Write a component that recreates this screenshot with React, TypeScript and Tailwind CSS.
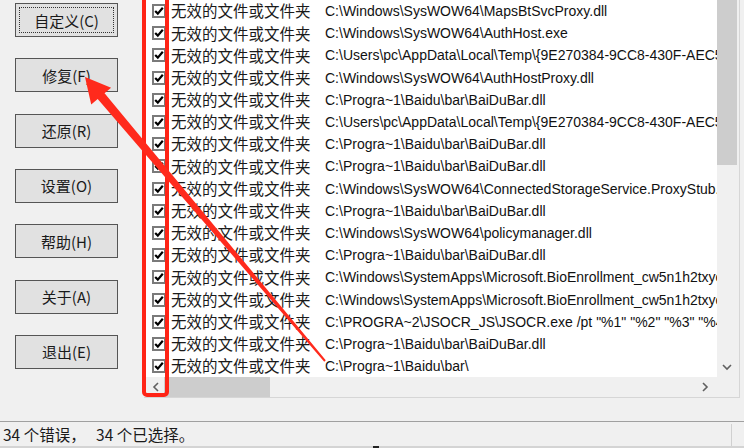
import React from "react";

const buttons = ["自定义(C)", "修复(F)", "还原(R)", "设置(O)", "帮助(H)", "关于(A)", "退出(E)"];

const rows = [
  "C:\\Windows\\SysWOW64\\MapsBtSvcProxy.dll",
  "C:\\Windows\\SysWOW64\\AuthHost.exe",
  "C:\\Users\\pc\\AppData\\Local\\Temp\\{9E270384-9CC8-430F-AEC5-7B1D2E9F0A43}\\setup.exe",
  "C:\\Windows\\SysWOW64\\AuthHostProxy.dll",
  "C:\\Progra~1\\Baidu\\bar\\BaiDuBar.dll",
  "C:\\Users\\pc\\AppData\\Local\\Temp\\{9E270384-9CC8-430F-AEC5-7B1D2E9F0A43}\\uninst.exe",
  "C:\\Progra~1\\Baidu\\bar\\BaiDuBar.dll",
  "C:\\Progra~1\\Baidu\\bar\\BaiDuBar.dll",
  "C:\\Windows\\SysWOW64\\ConnectedStorageService.ProxyStub.dll",
  "C:\\Progra~1\\Baidu\\bar\\BaiDuBar.dll",
  "C:\\Windows\\SysWOW64\\policymanager.dll",
  "C:\\Progra~1\\Baidu\\bar\\BaiDuBar.dll",
  "C:\\Windows\\SystemApps\\Microsoft.BioEnrollment_cw5n1h2txyewy\\BioEnrollment.exe",
  "C:\\Windows\\SystemApps\\Microsoft.BioEnrollment_cw5n1h2txyewy\\BioEnrollmentHost.exe",
  "C:\\PROGRA~2\\JSOCR_JS\\JSOCR.exe /pt \"%1\" \"%2\" \"%3\" \"%4\"",
  "C:\\Progra~1\\Baidu\\bar\\BaiDuBar.dll",
  "C:\\Progra~1\\Baidu\\bar\\",
];

// red arrow: tip near the 修复 button, thin tail at the last row
function arrowPoints() {
  const T = [85, 77];
  const E = [325, 361];
  const dx = E[0] - T[0];
  const dy = E[1] - T[1];
  const len = Math.hypot(dx, dy);
  const u = [dx / len, dy / len];
  const n = [-u[1], u[0]];
  const head = 25;
  const wing = 13;
  const B = [T[0] + head * u[0], T[1] + head * u[1]];
  const p = (c: number[], k: number) => `${c[0] + k * n[0]},${c[1] + k * n[1]}`;
  return [
    `${T[0]},${T[1]}`,
    p(B, wing),
    p(B, 4.5),
    p(E, 1),
    p(E, -1),
    p(B, -4.5),
    p(B, -wing),
  ].join(" ");
}

function Chevron({ dir }: { dir: "left" | "right" | "down" }) {
  const d =
    dir === "left" ? "M6 1 L2 5 L6 9" : dir === "right" ? "M2 1 L6 5 L2 9" : "M1 2 L5 6 L9 2";
  const w = dir === "down" ? 10 : 8;
  const h = dir === "down" ? 8 : 10;
  return (
    <svg width={w} height={h} viewBox={`0 0 ${w} ${h}`}>
      <path d={d} fill="none" stroke="#606060" strokeWidth="1.6" />
    </svg>
  );
}

function CheckBox() {
  return (
    <div className="w-[14px] h-[14px] border-2 border-[#7a7a7a] bg-white flex items-center justify-center shrink-0">
      <svg width="10" height="10" viewBox="0 0 10 10">
        <path d="M1.2 5 L3.8 7.6 L8.8 1.8" fill="none" stroke="#000" strokeWidth="2.2" />
      </svg>
    </div>
  );
}

export default function App() {
  return (
    <div className="relative w-[744px] h-[448px] overflow-hidden bg-[#f0f0f0] text-black font-['Noto_Sans_CJK_SC',sans-serif]">
      <div className="flex h-[421px]">
        {/* Buttons */}
        <div className="w-[144px] shrink-0 pl-[15px] pt-[3px] flex flex-col gap-[21.33px]">
          {buttons.map((b, i) => (
            <div
              key={b}
              className="relative w-[103px] h-[34px] border border-[#555555] bg-[#e1e1e1] flex items-center justify-center text-[15px] leading-none text-[#1a1a1a]"
            >
              {i === 0 && (
                <div className="absolute inset-[3px] border border-dotted border-[#333333]" />
              )}
              {b}
            </div>
          ))}
        </div>

        {/* List */}
        <div className="w-[596px] h-[398px] flex flex-col border-r border-b border-[#d6d6d6] bg-white">
          <div className="flex h-[377px]">
            <div className="w-[573px] overflow-hidden">
              {rows.map((r, i) => (
                <div key={i} className="flex items-center h-[22.2px] pl-[8px] whitespace-nowrap">
                  <CheckBox />
                  <span className="ml-[5px] w-[154px] shrink-0 text-[15.5px] leading-none text-[#1a1a1a]">
                    无效的文件或文件夹
                  </span>
                  <span className="font-['Liberation_Sans',sans-serif] text-[14px] leading-none text-[#111111]">
                    {r}
                  </span>
                </div>
              ))}
            </div>
            <div className="w-[22px] bg-[#f0f0f0] flex flex-col">
              <div className="w-[20px] h-[165px] bg-[#cdcdcd]" />
              <div className="flex-1" />
              <div className="w-[20px] h-[20px] flex items-center justify-center">
                <Chevron dir="down" />
              </div>
            </div>
          </div>
          <div className="flex h-[20px] bg-[#f0f0f0]">
            <div className="w-[20px] flex items-center justify-center pl-[4px]">
              <Chevron dir="left" />
            </div>
            <div className="w-[106px] bg-[#cdcdcd]" />
            <div className="flex-1" />
            <div className="w-[20px] flex items-center justify-center pr-[4px]">
              <Chevron dir="right" />
            </div>
            <div className="w-[22px]" />
          </div>
        </div>
      </div>

      {/* Status bar */}
      <div className="relative h-[27px] border-t border-[#a0a0a0] flex items-center pl-[3px] text-[15.5px] leading-none whitespace-pre text-[#1a1a1a]">
        34 个错误，   34 个已选择。
        <div className="absolute right-[12px] top-[2px] bottom-[2px] w-px bg-[#d0d0d0]" />
        <div className="absolute left-0 right-0 bottom-0 h-[2px] bg-[#d4d4d4]" />
        <div className="absolute left-[373px] bottom-0 w-[6px] h-[2px] bg-[#222222]" />
      </div>

      {/* Red highlight box */}
      <div className="absolute left-[142px] top-[-6px] w-[27px] h-[403px] border-4 border-[#ff2416] rounded-[5px] pointer-events-none" />

      {/* Red arrow */}
      <svg className="absolute left-0 top-0 pointer-events-none" width="744" height="448">
        <polygon points={arrowPoints()} fill="#ff2a1c" />
      </svg>
    </div>
  );
}
